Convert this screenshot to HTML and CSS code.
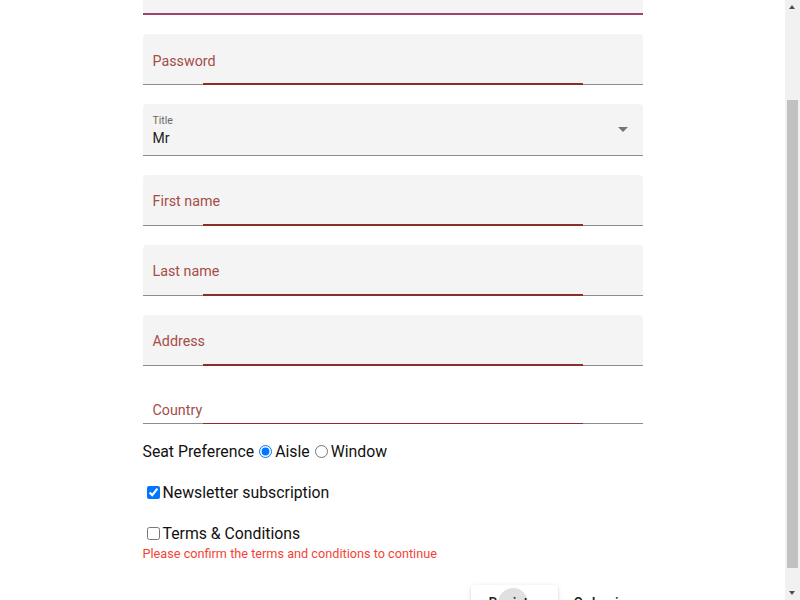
FILE: index.html
```html
<!DOCTYPE html>
<html lang="en">
<head>
<meta charset="utf-8">
<title>Register</title>
<link rel="stylesheet" href="styles.css">
</head>
<body>
<div class="page">
<form class="form">
  <div class="field"><label class="label">Username</label></div>
  <div class="field focused"><label class="label small focus">Email</label></div>
  <div class="field"><label class="label lower">Password</label></div>
  <div class="field select">
    <span class="small-label">Title</span>
    <span class="value">Mr</span>
    <span class="arrow"></span>
  </div>
  <div class="field"><label class="label">First name</label></div>
  <div class="field"><label class="label">Last name</label></div>
  <div class="field"><label class="label">Address</label></div>
  <div class="field plain"><label class="label">Country</label></div>
  <div class="row seat"><span>Seat Preference</span><input type="radio" name="seat" checked><span>Aisle</span><input type="radio" name="seat"><span>Window</span></div>
  <div class="row news"><input type="checkbox" checked><span>Newsletter subscription</span></div>
  <div class="row terms"><input type="checkbox"><span>Terms &amp; Conditions</span></div>
  <div class="error">Please confirm the terms and conditions to continue</div>
  <div class="actions">
    <button type="button" class="btn raised">Register<span class="ripple"></span></button>
    <button type="button" class="btn">Or Login</button>
  </div>
</form>
</div>
<div class="scrollbar">
  <span class="sb-up"></span>
  <span class="sb-thumb"></span>
  <span class="sb-down"></span>
</div>
<script src="script.js"></script>
</body>
</html>
```
FILE: styles.css
```css
html, body {
  margin: 0;
  padding: 0;
}
body {
  font-family: Roboto, "Noto Sans", sans-serif;
  color: #212121;
  background: #fff;
}
.page {
  margin-right: 15px;
}
.form {
  width: 500px;
  margin: 0 auto;
}
.field {
  position: relative;
  height: 50px;
  background: #f4f4f4;
  border-radius: 4px 4px 0 0;
  border-bottom: 1px solid #8c8c8c;
  margin-bottom: 19px;
}
.field::after {
  content: "";
  position: absolute;
  left: 60px;
  right: 60px;
  bottom: -1px;
  height: 2px;
  background: #8b2e2a;
}
.field.focused {
  height: 49px;
  border-bottom: 2px solid #a3426f;
}
.field.focused::after,
.field.select::after {
  display: none;
}
.label {
  position: absolute;
  left: 10px;
  top: 17px;
  font-size: 14.3px;
  line-height: 18px;
  color: #a54d47;
}
.label.lower {
  top: 17.5px;
}
.label.small {
  top: 8px;
  font-size: 11px;
}
.label.focus {
  color: #a3426f;
}
.field.select {
  height: 51px;
}
.select .small-label {
  position: absolute;
  left: 10px;
  top: 10px;
  font-size: 10.5px;
  line-height: 13px;
  color: #666;
}
.select .value {
  position: absolute;
  left: 10px;
  top: 24.5px;
  font-size: 14px;
  line-height: 18px;
  color: #212121;
}
.select .arrow {
  position: absolute;
  right: 15px;
  top: 23px;
  width: 0;
  height: 0;
  border-left: 5px solid transparent;
  border-right: 5px solid transparent;
  border-top: 5px solid #757575;
}
.field.plain {
  background: transparent;
  height: 38px;
  margin-bottom: 0;
}
.field.plain .label {
  top: 16px;
}
.field.plain::after {
  height: 1px;
}
.row {
  display: flex;
  align-items: center;
  font-size: 15.8px;
  line-height: 19px;
  color: #111;
}
.row input {
  margin: 0 3px 0 5px;
  width: 13px;
  height: 13px;
}
.row input[type="checkbox"] {
  margin: 0 3px 0 4px;
}
.seat {
  margin-top: 18px;
}
.news {
  margin-top: 22px;
}
.terms {
  margin-top: 22px;
}
.error {
  margin-top: 4px;
  font-size: 12.7px;
  line-height: 14px;
  color: #f44336;
}
.actions {
  display: flex;
  justify-content: flex-end;
  margin-top: 24px;
}
.btn {
  position: relative;
  height: 36px;
  padding: 0 16px;
  border: none;
  border-radius: 4px;
  background: transparent;
  font-family: Roboto, "Noto Sans", sans-serif;
  font-size: 14px;
  font-weight: 500;
  line-height: 36px;
  color: #212121;
  overflow: hidden;
}
.btn.raised {
  padding: 0 17px;
  background: #fff;
  box-shadow: 0 3px 1px -2px rgba(0,0,0,.2), 0 2px 2px 0 rgba(0,0,0,.14), 0 1px 5px 0 rgba(0,0,0,.12);
}
.ripple {
  position: absolute;
  left: 27px;
  top: 3px;
  width: 30px;
  height: 30px;
  border-radius: 50%;
  background: rgba(0,0,0,.12);
}
.scrollbar {
  position: fixed;
  top: 0;
  right: 0;
  width: 15px;
  height: 100vh;
  background: #f1f1f1;
}
.sb-up,
.sb-down {
  position: absolute;
  left: 4px;
  width: 0;
  height: 0;
  border-left: 3.5px solid transparent;
  border-right: 3.5px solid transparent;
}
.sb-up {
  top: 5px;
  border-bottom: 4px solid #505050;
}
.sb-down {
  bottom: 5px;
  border-top: 4px solid #505050;
}
.sb-thumb {
  position: absolute;
  left: 2px;
  right: 2px;
  top: 100px;
  height: 468px;
  background: #c1c1c1;
}
```
FILE: script.js
```js
function scrollIt() { window.scrollTo(0, 106); }
scrollIt();
window.addEventListener('load', scrollIt);
```
